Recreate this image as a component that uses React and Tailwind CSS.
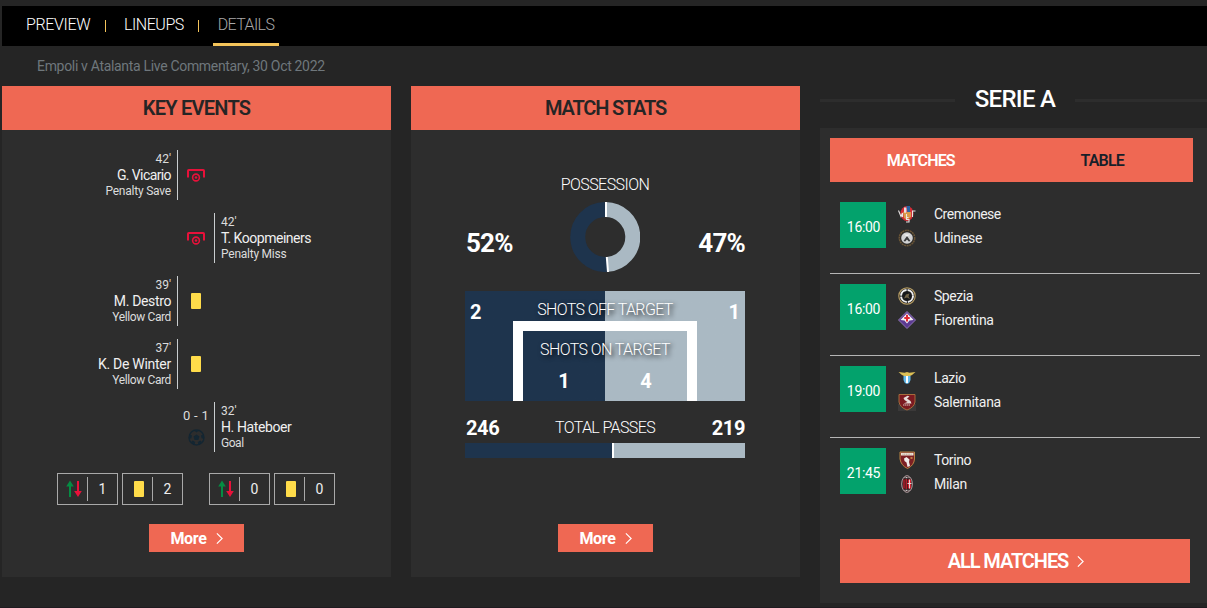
function Chevron({ className }) {
  return (
    <svg viewBox="0 0 8 14" className={className} fill="none" stroke="#fff" strokeWidth="1.3">
      <path d="M1 1.2 7 7 1 12.8" />
    </svg>
  );
}

function PenaltyIcon() {
  return (
    <svg width="20" height="14" viewBox="0 0 20 14" fill="none" stroke="#e8113a">
      <path d="M2 9.5V2.8Q2 2 2.800 2H17.200Q18 2 18 2.800V9.500" strokeWidth="2" />
      <circle cx="10" cy="9.500" r="3.400" strokeWidth="1.600" />
      <circle cx="10" cy="9.500" r="1.300" fill="#e8113a" stroke="none" />
    </svg>
  );
}

function YellowCard() {
  return <div className="h-4 w-2.5 rounded-[1px] bg-[#ffdc4a]" />;
}

function Ball() {
  return (
    <svg width="17" height="17" viewBox="0 0 17 17">
      <circle cx="8.5" cy="8.5" r="7.500" fill="none" stroke="#142632" strokeWidth="1.400" />
      <g fill="#142632">
        <path d="M8.5 5.4 11.5 7.5 10.4 11H6.600L5.500 7.500Z" />
        <path d="M5.500 1H11.500L8.500 3.500ZM1.200 5 4 6.600 3.400 9.300 1 9.800ZM15.800 5 13 6.600 13.600 9.300 16 9.800ZM3 13.300 4.700 11.500 7.200 13 6.700 15.900ZM14 13.300 12.300 11.500 9.800 13 10.300 15.900Z" />
      </g>
    </svg>
  );
}

function SubArrows() {
  return (
    <svg width="16" height="18" viewBox="0 0 16 18">
      <path d="M3 17V6.500H0.200L4 0.500 7.800 6.500H5V17Z" fill="#048c43" />
      <path d="M11 1V11H8.200L12 17 15.800 11H13V1Z" fill="#e8113a" />
    </svg>
  );
}

const crests = {
  Cremonese: (
    <>
      <ellipse cx="9" cy="8.500" rx="6.500" ry="7.500" fill="#d42c37" />
      <path d="M6 2.500H8.500V8H6Z" fill="#e9dfe2" />
      <path d="M8.500 1H12V7.500H9.500Z" fill="#2463a6" />
      <path d="M5 6.500 7 8 9 7 13 7V12L9 15 6 13Z" fill="#d99a4a" />
      <path d="M0.500 5.500 3 11.500 4.500 8V12M17.500 6H14.500V12M8.500 9V12M10.500 12.500H8.500V14.500H11V17H8" fill="none" stroke="#e9e4e4" strokeWidth="1.100" />
    </>
  ),
  Udinese: (
    <>
      <circle cx="9" cy="9" r="7.700" fill="#302d29" stroke="#6b5637" strokeWidth="1.500" strokeDasharray="2 .6" />
      <circle cx="9" cy="9" r="5.800" fill="#d2d3d4" />
      <path d="M5.500 12 9 7 12.500 12 10.800 12.500 9 10.500 7.200 12.500Z" fill="#3b3c3d" />
      <path d="M6 5.500H12L9 7.500Z" fill="#f3f3f3" />
    </>
  ),
  Spezia: (
    <>
      <circle cx="9" cy="9" r="8.200" fill="#17171a" stroke="#b49b63" strokeWidth="1.200" />
      <circle cx="9" cy="9" r="6" fill="none" stroke="#eeeeee" strokeWidth="2" strokeDasharray="8.300 1.100" />
      <path d="M6 11.500 8 7.500 11.500 6.500 10.500 9.500 12 12 9 10.500Z" fill="#6f6248" />
    </>
  ),
  Fiorentina: (
    <>
      <path d="M9 0.500 17.500 9 9 17.500 0.500 9Z" fill="#5c3a92" stroke="#8f77b5" />
      <path d="M9 2.200 14.500 7.800 15.500 9 11.500 9.500 9 12.500 6.500 9.500 2.500 9Z" fill="#f6f1f5" />
      <path d="M9 3.800V10.500M6.300 7H11.700" stroke="#e22a35" strokeWidth="2" />
    </>
  ),
  Lazio: (
    <>
      <path d="M0.500 3 6.500 3.800 9 3 11.500 3.800 17.500 3 14 6 11 7.500H7L4 6Z" fill="#dcbf55" />
      <path d="M5.500 7H12.500V11Q12 14 9 15 6 14 5.500 11Z" fill="#63b9ea" />
      <path d="M8 7H10V14H8Z" fill="#fff" />
    </>
  ),
  Salernitana: (
    <>
      <path d="M0 11H18V18H0Z" fill="#3b3939" />
      <path d="M1 1.500H17V9Q16 14.500 9 17 2 14.500 1 9Z" fill="#7c1a20" stroke="#a56b3c" />
      <path d="M5.500 5 9.500 2.800 11.500 3.500 9 5.500 12.500 8 13.500 10.500H5.500L9.500 9 6.500 7Z" fill="#e6dcd8" />
      <path d="M5 12H12" stroke="#d9c5c0" strokeWidth="1.200" strokeDasharray="1.500 .5" />
    </>
  ),
  Torino: (
    <>
      <path d="M2 1H16.500V8Q16 14.500 9.500 17.500 3 14.500 2 8Z" fill="#7d2024" stroke="#b98643" />
      <path d="M3 3.200H15.500" stroke="#eee4d8" strokeWidth="2.600" />
      <path d="M4.500 3.200H13.500" stroke="#8e7c68" strokeWidth=".7" strokeDasharray="1 .7" />
      <path d="M6 7.500 8.500 6 11.500 8.500 11 11 12 15 9.500 16 8.500 11.500 6.500 10Z" fill="#f0ebe8" />
      <path d="M12.500 7H14.500" stroke="#dfad57" strokeWidth="1.300" />
    </>
  ),
  Milan: (
    <>
      <ellipse cx="9" cy="9" rx="5.300" ry="8.300" fill="#28191b" stroke="#b9a5a7" strokeWidth="1" />
      <path d="M6 4.500V13.500M8.200 4V14" stroke="#d4212e" strokeWidth="1.200" />
      <path d="M9.800 4.500H13V13.500H9.800Z" fill="#d4212e" />
      <path d="M11.500 4.500V13.500M9.500 8.500H13.500" stroke="#f0e4e4" strokeWidth=".9" />
      <path d="M6.500 2.700H11.500M6.500 15.300H11.500" stroke="#eee" strokeWidth="1" strokeDasharray="1 .5" />
    </>
  ),
};

const events = [
  { side: "home", icon: "penalty", time: "42'", name: "G. Vicario", type: "Penalty Save", nameCls: "tracking-[-0.6px]", typeCls: "tracking-[-0.22px]" },
  { side: "away", icon: "penalty", time: "42'", name: "T. Koopmeiners", type: "Penalty Miss", nameCls: "tracking-[-0.47px]", typeCls: "tracking-[-0.24px]" },
  { side: "home", icon: "card", time: "39'", name: "M. Destro", type: "Yellow Card", nameCls: "tracking-[-0.36px]", typeCls: "tracking-[-0.38px]" },
  { side: "home", icon: "card", time: "37'", name: "K. De Winter", type: "Yellow Card", nameCls: "tracking-[-0.27px]", typeCls: "tracking-[-0.38px]" },
  { side: "away", icon: "ball", score: "0 - 1", time: "32'", name: "H. Hateboer", type: "Goal", nameCls: "tracking-[-0.4px]", typeCls: "tracking-[-0.45px]" },
];

function EventText({ e, className }) {
  return (
    <div className={`flex flex-col justify-center whitespace-nowrap leading-4 ${className}`}>
      <span className="text-xs leading-4 text-[#dcdcdc]">{e.time}</span>
      <span className={`text-sm leading-4 text-[#f0f0f0] ${e.nameCls}`}>{e.name}</span>
      <span className={`text-xs leading-4 text-[#dcdcdc] ${e.typeCls}`}>{e.type}</span>
    </div>
  );
}

function EventRow({ e }) {
  return (
    <li className="flex h-[50px]">
      <div className="flex w-44 justify-end">
        {e.side === "home" && <EventText e={e} className="border-r border-[#c9cdcf] pr-1.5 text-right" />}
      </div>
      <div className="flex w-9 flex-col items-center justify-center">
        {e.score && <span className="mb-[5px] whitespace-nowrap text-[13px] leading-4 tracking-[0.3px] text-[#dcdcdc]">{e.score}</span>}
        {e.icon === "penalty" && <PenaltyIcon />}
        {e.icon === "card" && <YellowCard />}
        {e.icon === "ball" && <Ball />}
      </div>
      {e.side === "away" && <EventText e={e} className="border-l border-[#c9cdcf] pl-1.5" />}
    </li>
  );
}

function Counter({ icon, value }) {
  return (
    <div className="flex h-8 w-[61px] items-center border border-[#a9a9a9]">
      <div className="flex w-[29px] justify-center pl-0.5">{icon}</div>
      <div className="flex h-6 flex-1 items-center justify-center border-l border-[#a9a9a9] text-sm leading-4 text-[#eee]">{value}</div>
    </div>
  );
}

function MoreButton() {
  return (
    <button className="flex h-7 w-[95px] items-center justify-center gap-[9px] bg-[#ef6853] text-base font-bold leading-5 tracking-[-0.3px] text-white">
      <span className="pt-px">More</span>
      <Chevron className="h-[13px] w-[7px]" />
    </button>
  );
}

function Panel({ title, titleCls, children }) {
  return (
    <section className="h-[491px] w-[389px] bg-[#2d2d2d]">
      <h2 className={`flex h-11 items-center justify-center bg-[#ef6853] text-xl font-semibold text-[#252525] ${titleCls}`}>{title}</h2>
      {children}
    </section>
  );
}

function KeyEvents() {
  return (
    <Panel title="KEY EVENTS" titleCls="tracking-[-0.75px]">
      <ul className="flex flex-col gap-[13px] pt-5">
        {events.map((e, i) => <EventRow key={i} e={e} />)}
      </ul>
      <div className="mt-[21px] flex pl-[55px]">
        <div className="flex gap-1">
          <Counter icon={<SubArrows />} value="1" />
          <Counter icon={<YellowCard />} value="2" />
        </div>
        <div className="ml-[26px] flex gap-1">
          <Counter icon={<SubArrows />} value="0" />
          <Counter icon={<YellowCard />} value="0" />
        </div>
      </div>
      <div className="mt-[19px] flex justify-center"><MoreButton /></div>
    </Panel>
  );
}

function Donut() {
  return (
    <svg width="70" height="70" viewBox="0 0 70 70" fill="none" strokeWidth="15">
      <path d="M35 7.500A27.500 27.500 0 0 1 37.600 62.400" stroke="#aab9c3" />
      <path d="M37.600 62.400A27.500 27.500 0 1 1 35 7.500" stroke="#1e344d" />
      <path d="M36 0V15M36.800 55 38 70" stroke="#fff" strokeWidth="2" />
    </svg>
  );
}

function MatchStats() {
  return (
    <Panel title="MATCH STATS" titleCls="tracking-[-1.2px]">
      <div className="ml-[54px] flex w-[280px] flex-col text-white">
        <div className="pt-[47px] text-center text-base font-light leading-4 tracking-[-0.55px]">POSSESSION</div>
        <div className="mt-[9px] flex items-center justify-between">
          <span className="w-[104px] pl-px pt-[11px] text-[26px] font-bold leading-7 tracking-[-0.8px]">52%</span>
          <Donut />
          <span className="w-[104px] pt-[11px] text-right text-[26px] font-bold leading-7 tracking-[-0.8px]">47%</span>
        </div>
        <div className="mt-[19px] flex h-[110px] flex-col bg-linear-to-r from-[#1e344d] from-50% to-[#aab9c3] to-50%">
          <div className="flex h-[30px] justify-between px-[5px] pt-[11px]">
            <span className="w-3 text-xl font-bold leading-5">2</span>
            <span className="whitespace-nowrap text-base font-light leading-4 tracking-[-0.62px] [text-shadow:2px_2px_5px_#000]">SHOTS OFF TARGET</span>
            <span className="w-3 text-right text-xl font-bold leading-5">1</span>
          </div>
          <div className="mx-auto flex w-[184px] flex-1 flex-col border-x-10 border-t-10 border-white">
            <span className="whitespace-nowrap pt-[11px] text-center text-base font-light leading-4 tracking-[-0.6px] [text-shadow:2px_2px_5px_#000]">SHOTS ON TARGET</span>
            <div className="mt-[13px] grid grid-cols-2 text-center text-xl font-bold leading-5">
              <span>1</span>
              <span>4</span>
            </div>
          </div>
        </div>
        <div className="mt-[17px] flex h-5 items-center justify-between">
          <span className="w-12 pl-px text-xl font-bold leading-5 tracking-[-0.4px]">246</span>
          <span className="text-base font-light leading-5 tracking-[-0.63px]">TOTAL PASSES</span>
          <span className="w-12 text-right text-xl font-bold leading-5 tracking-[-0.4px]">219</span>
        </div>
        <div className="mt-[5px] flex h-[15px] bg-[#aab9c3]">
          <div className="w-[149px] border-r-2 border-white bg-[#1e344d]" />
        </div>
      </div>
      <div className="mt-[66px] flex justify-center"><MoreButton /></div>
    </Panel>
  );
}

const fixtures = [
  { time: "16:00", teams: [["Cremonese", "tracking-[-0.5px]"], ["Udinese", "tracking-[-0.3px]"]] },
  { time: "16:00", teams: [["Spezia", "tracking-[-0.45px]"], ["Fiorentina", "tracking-[-0.25px]"]] },
  { time: "19:00", teams: [["Lazio", "tracking-[-0.4px]"], ["Salernitana", "tracking-[-0.3px]"]] },
  { time: "21:45", teams: [["Torino", "tracking-[-0.4px]"], ["Milan", "tracking-[-0.3px]"]] },
];

function SerieA() {
  return (
    <aside className="flex w-[387px] flex-col">
      <div className="flex h-[42px] items-center pb-4">
        <div className="mt-[3px] h-[3px] w-[135px] bg-[#2d2d2d]" />
        <h2 className="w-[120px] text-center text-2xl font-medium leading-6 tracking-[-0.7px] text-white">SERIE A</h2>
        <div className="mt-[3px] h-[3px] flex-1 bg-[#2d2d2d]" />
      </div>
      <div className="h-[475px] bg-[#2d2d2d] pl-2.5 pt-2.5">
        <div className="grid h-11 w-[363px] grid-cols-2 items-center bg-[#ef6853] pt-0.5 text-center text-base font-semibold tracking-[-0.85px]">
          <span className="text-white">MATCHES</span>
          <span className="text-[#171f29]">TABLE</span>
        </div>
        <ul className="w-[370px] pt-2.5">
          {fixtures.map((f, i) => (
            <li key={i} className="flex h-[82px] border-b border-[#b5b5b5] pl-2.5 pt-2.5 last:border-b-0">
              <div className="flex size-[46px] items-center justify-center bg-[#03a26c] pt-[3px] pl-px text-sm leading-5 tracking-[-0.3px] text-white">{f.time}</div>
              <div className="ml-3">
                {f.teams.map(([name, cls]) => (
                  <div key={name} className="flex h-6 items-center">
                    <svg width="18" height="18" viewBox="0 0 18 18">{crests[name]}</svg>
                    <span className={`ml-[18px] text-sm leading-5 text-[#f0f0f0] ${cls}`}>{name}</span>
                  </div>
                ))}
              </div>
            </li>
          ))}
        </ul>
        <button className="ml-2.5 mt-[19px] flex h-11 w-[350px] items-center justify-center gap-[9px] bg-[#ef6853] pl-0.5 text-xl font-semibold tracking-[-1.1px] text-white">
          ALL MATCHES
          <Chevron className="h-[13px] w-[7px]" />
        </button>
      </div>
    </aside>
  );
}

export default function App() {
  return (
    <div className="h-[608px] overflow-hidden border-b border-[#1f1b20] bg-[#252525] pl-0.5 pt-1.5 font-[Roboto,sans-serif]">
      <nav className="flex h-10 bg-black pl-6 text-base font-light leading-[37px] text-white">
        <a className="w-[79px] tracking-[-0.35px]">PREVIEW</a>
        <i className="mt-3.5 h-3 w-px bg-[#f4c45a]" />
        <a className="w-[92px] pl-[18px] tracking-[-0.45px]">LINEUPS</a>
        <i className="mt-3.5 h-3 w-px bg-[#f4c45a]" />
        <a className="ml-3.5 h-10 w-[66px] border-b-3 border-[#f4c45a] text-center tracking-[-0.6px] text-[#a9a9a9]">DETAILS</a>
      </nav>
      <p className="h-10 pl-[35px] text-sm leading-[41px] tracking-[-0.32px] text-[#6f777c]">Empoli v Atalanta Live Commentary, 30 Oct 2022</p>
      <main className="flex gap-5">
        <KeyEvents />
        <MatchStats />
        <SerieA />
      </main>
    </div>
  );
}
